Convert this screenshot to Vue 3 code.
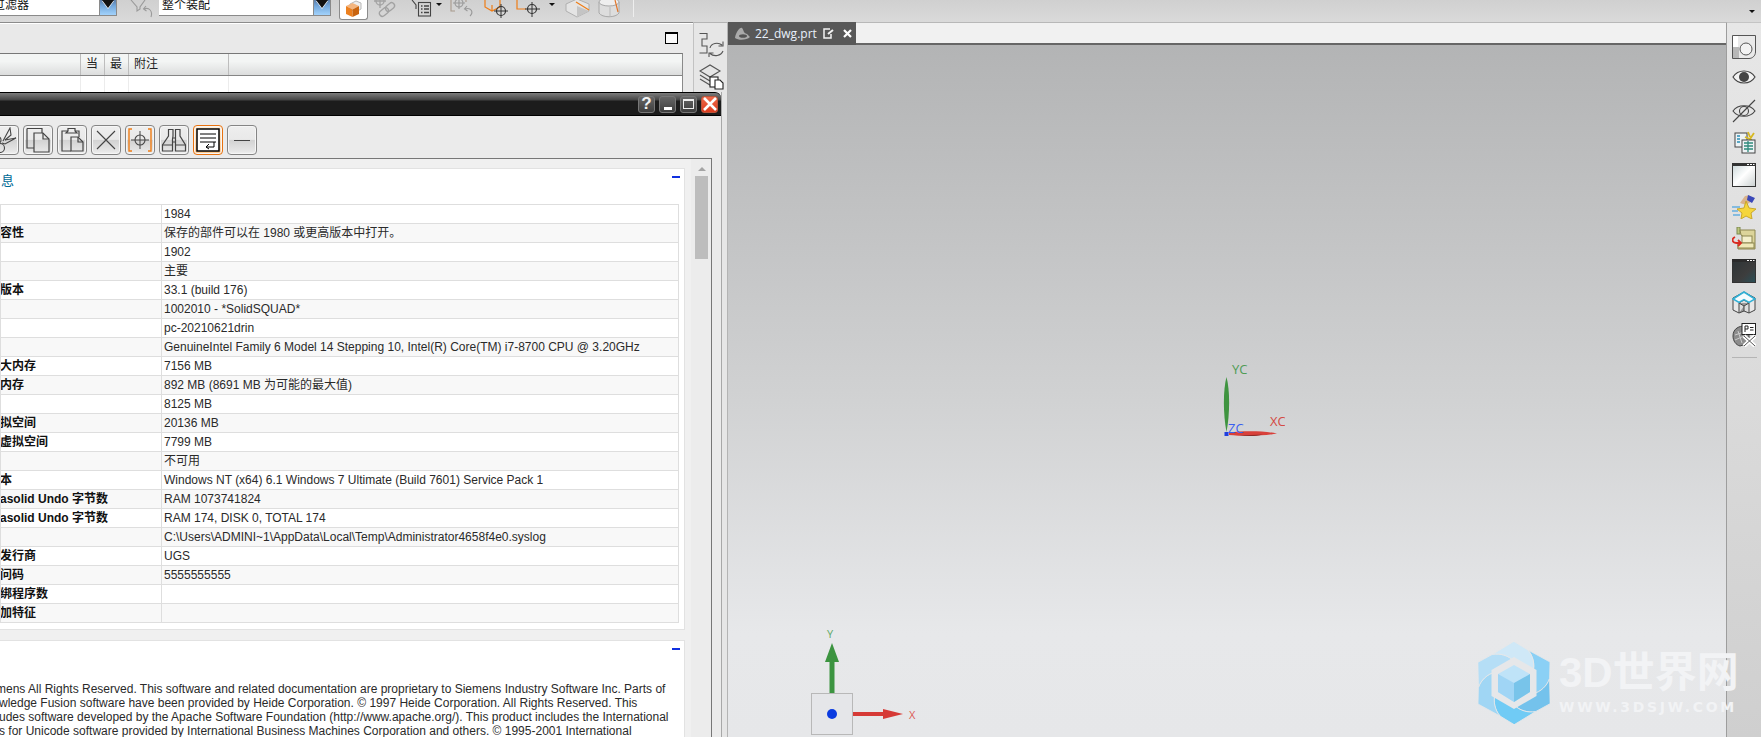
<script setup>
const rows = [
  ['', '1984'],
  ['容性', '保存的部件可以在 1980 或更高版本中打开。'],
  ['', '1902'],
  ['', '主要'],
  ['版本', '33.1 (build 176)'],
  ['', '1002010 - *SolidSQUAD*'],
  ['', 'pc-20210621drin'],
  ['', 'GenuineIntel Family 6 Model 14 Stepping 10, Intel(R) Core(TM) i7-8700 CPU @ 3.20GHz'],
  ['大内存', '7156 MB'],
  ['内存', '892 MB (8691 MB 为可能的最大值)'],
  ['', '8125 MB'],
  ['拟空间', '20136 MB'],
  ['虚拟空间', '7799 MB'],
  ['', '不可用'],
  ['本', 'Windows NT (x64) 6.1 Windows 7 Ultimate (Build 7601) Service Pack 1'],
  ['asolid Undo 字节数', 'RAM 1073741824'],
  ['asolid Undo 字节数', 'RAM 174, DISK 0, TOTAL 174'],
  ['', 'C:\\Users\\ADMINI~1\\AppData\\Local\\Temp\\Administrator4658f4e0.syslog'],
  ['发行商', 'UGS'],
  ['问码', '5555555555'],
  ['绑程序数', ''],
  ['加特征', ''],
]
const petals = [
  { a: 0, c: '#8bd0f5' },
  { a: 60, c: '#74c2ec' },
  { a: 120, c: '#70cbf5' },
  { a: 180, c: '#a0d6f4' },
  { a: 240, c: '#b5def6' },
  { a: 300, c: '#cfe8f7' },
]
</script>

<template>
  <div class="app">
    <header class="topbar">
      <div class="combo c1"><span class="combo-text t1">过滤器</span><i class="drop"></i></div>
      <svg class="ti m13" width="23" height="18" viewBox="0 0 23 18" fill="none" stroke="#9a9a9a" stroke-width="1.1"><path d="M1 0L7 7V11L10 9V7L15 0"/><path d="M21 17C23 11 19 7 14 9M16 6L13.5 9L16.5 11"/></svg>
      <div class="combo c2"><span class="combo-text">整个装配</span><i class="drop"></i></div>
      <div class="active-btn">
        <svg width="18" height="18" viewBox="0 0 18 18"><path d="M5 4L11 1L16 3V9L11 12L5 9Z" fill="#eee" stroke="#b8b8b8"/><path d="M1 6L7.500 3L14 6L7.500 9.500Z" fill="#f3b57f"/><path d="M1 6L7.500 9.500V17L1 14Z" fill="#ec801f"/><path d="M7.500 9.500L14 6V14L7.500 17Z" fill="#c9640f"/></svg>
      </div>
      <svg class="ti m5" width="24" height="18" viewBox="0 0 24 18" fill="none" stroke="#a2a2a2" stroke-width="1.3"><circle cx="7" cy="1" r="4"/><path d="M7 -3V8M1 1H13"/><rect x="6" y="9" width="10" height="6" rx="3" transform="rotate(-40 11 12)"/><rect x="12" y="4" width="10" height="6" rx="3" transform="rotate(-40 17 7)"/></svg>
      <svg class="ti m14" width="22" height="18" viewBox="0 0 22 18" fill="none" stroke="#444" stroke-width="1.1"><path d="M1 0L5 5V9"/><rect x="7.500" y="2.500" width="12" height="13.500"/><path d="M10 6H11.500M13 6H18M10 9H11.500M13 9H18M10 12.500H11.500M13 12.500H18" stroke-width="1.400"/></svg>
      <i class="mini m3"></i>
      <svg class="ti m8" width="24" height="18" viewBox="0 0 24 18" fill="none" stroke="#a89a8c" stroke-width="1.1"><path d="M1 0V11H5M16 0V2"/><circle cx="9" cy="3" r="4" stroke="#999"/><path d="M9 -2V9M3 3H15" stroke="#999"/><path d="M20 16C24 12 21 7 15 9M17 6L14.500 9L17.500 11" stroke="#999"/></svg>
      <svg class="ti m10" width="25" height="18" viewBox="0 0 25 18" fill="none" stroke="#ef7d16" stroke-width="1.2"><path d="M1 0V7L8 11L16 7V0M8 11V5"/><circle cx="17" cy="11" r="4.500" stroke="#333"/><path d="M17 4V18M10 11H24" stroke="#333" stroke-width="1"/></svg>
      <svg class="ti m7" width="27" height="18" viewBox="0 0 27 18" fill="none" stroke="#ef7d16" stroke-width="1.2"><path d="M1 0V9H10"/><circle cx="16" cy="9" r="4.500" stroke="#333"/><path d="M16 2V17M9 9H24" stroke="#333" stroke-width="1"/></svg>
      <i class="mini m6"></i>
      <svg class="ti m10" width="25" height="18" viewBox="0 0 25 18"><path d="M1 4L12 -1L24 4V11L12 17L1 11Z" fill="#e4e4e4" stroke="#b0b0b0"/><path d="M12 6L24 11L12 17Z" fill="#c4c4c4"/><path d="M11 2L24 10" stroke="#ef7d16" stroke-width="1.2"/></svg>
      <svg class="ti m8" width="23" height="18" viewBox="0 0 23 18"><path d="M1 2V13C4 18 18 18 21 13V2" fill="#ddd" stroke="#a8a8a8"/><ellipse cx="11" cy="2" rx="10" ry="4" fill="#eee" stroke="#a8a8a8"/><path d="M12 7V17" stroke="#b9b9b9"/><path d="M17 0L20 12" stroke="#e2762a" stroke-width="1.2" fill="none"/></svg>
      <i class="tsep"></i>
      <i class="mini end"></i>
    </header>

    <main class="body">
      <section class="leftpanel">
        <div class="lp-head"><i class="restore"></i></div>
        <div class="lp-table">
          <div class="lp-row hdr">
            <span class="c-a"></span><span class="c-b">当</span><span class="c-b">最</span><span class="c-c">附注</span><span class="c-d"></span>
          </div>
          <div class="lp-row">
            <span class="c-a"></span><span class="c-b"></span><span class="c-b"></span><span class="c-c"></span><span class="c-d"></span>
          </div>
        </div>
      </section>

      <aside class="midstrip">
        <svg width="25" height="25" viewBox="0 0 25 25" fill="none" stroke="#555" stroke-width="1.1"><path d="M0.500 0.500H8V6H3V13H8V20H0.500"/><path d="M11 15C12 10 19 9 23 12M24 8.500V13H19.500"/><path d="M24 18C22 23 15 24 11 20.500M10 24V20H14.500"/></svg>
        <svg width="25" height="26" viewBox="0 0 25 26" fill="none" stroke="#555" stroke-width="1.1"><path d="M1 7L11 1L21 7L11 13Z"/><path d="M1 11L11 17L14 15M1 15L11 21L14 19"/><rect x="11" y="13" width="8" height="10" fill="#fff" stroke="#222"/><path d="M16 16H21L24 19V25H16Z" fill="#fff" stroke="#222"/></svg>
      </aside>

      <section class="graphics">
        <div class="tabs">
          <div class="tab">
            <svg width="17" height="14" viewBox="0 0 17 14"><path d="M1 11C2 5 6 0 8 1C10 3 9 6 13 7L16 10C13 13 5 14 1 11Z" fill="#aaa"/><ellipse cx="9" cy="9" rx="4" ry="1.800" fill="#555"/></svg>
            <span class="tab-name">22_dwg.prt</span>
            <svg class="tab-save" width="11" height="11" viewBox="0 0 11 11" fill="none" stroke="#f2f2f2" stroke-width="1.500"><path d="M7 1H1V10H8V6"/><path d="M5 6L10 2" stroke-width="2"/></svg>
            <svg class="tab-x" width="9" height="9" viewBox="0 0 9 9" stroke="#fff" stroke-width="2.200"><path d="M1 1L8 8M8 1L1 8"/></svg>
          </div>
        </div>
        <div class="canvas">
          <svg class="wcs" width="70" height="75" viewBox="0 0 70 75">
            <path d="M11.500 13C15 26 15 50 11.500 68C8 50 8 26 11.500 13Z" fill="#3f9440"/>
            <path d="M14 68.500C30 66.500 50 67 62 69.500C50 72 30 72.500 14 71Z" fill="#d8403a"/>
            <path d="M24 71C32 71 40 71 48 70.500C40 72.500 32 72.500 24 71Z" fill="#8c2a26"/>
            <rect x="9.500" y="68" width="4" height="4" fill="#1f3fe0"/>
            <text x="17" y="10" fill="#4f9c55">YC</text>
            <text x="13" y="69" fill="#3a5ff0">ZC</text>
            <text x="55" y="62" fill="#d44a44">XC</text>
          </svg>
          <svg class="triad" width="120" height="110" viewBox="0 0 120 110">
            <text class="tr-l" x="17" y="8" fill="#5fa868">Y</text>
            <path d="M22 13L29 32H24.500V64H19.500V32H15Z" fill="#3c9440"/>
            <rect x="1.500" y="63.500" width="41" height="41" fill="#e5e6e9" stroke="#b8b8b8"/>
            <circle cx="22" cy="84" r="5" fill="#0b3be0"/>
            <path d="M43 82H73V79L93 84L73 89V86H43Z" fill="#d63a36"/>
            <text class="tr-l" x="99" y="89" fill="#dc5a55">X</text>
          </svg>
        </div>
        <div class="watermark">
          <svg class="wm-logo" width="72" height="82" viewBox="0 0 72 82">
            <g stroke="#e6e7e9" stroke-width="0.8">
              <path v-for="p in petals" :key="p.a" :fill="p.c" :transform="`rotate(${p.a} 36 41)`" d="M50 8L72 20L71.600 36.600C68.900 44 63 49.700 55 52L55 30C57 22 55 14 50 8Z"/>
            </g>
            <path d="M36 15L58.500 28V54L36 67L13.500 54V28Z" fill="#e6e7e9"/>
            <path d="M36 23L52 32V50L36 60L20 50V32Z" fill="#bfe3f8"/>
            <path d="M20 32L36 41V60L20 50Z" fill="#a0d5f5"/>
            <path d="M52 32L36 41V60L52 50Z" fill="#78c4ea"/>
          </svg>
          <div class="wm-text">
            <div class="wm-big">3D世界网</div>
            <div class="wm-small">WWW.3DSJW.COM</div>
          </div>
        </div>
      </section>

      <aside class="rightstrip">
        <svg width="24" height="24" viewBox="0 0 24 24"><path d="M0.500 0.500H23.500V17C23.500 21 20 23.500 17 23.500H0.500Z" fill="#e9e9e9" stroke="#555"/><rect x="1" y="1" width="5" height="11" fill="#fff"/><rect x="1" y="12" width="6" height="11" fill="#b8b8b8"/><circle cx="14" cy="14" r="6" fill="#f2f2f2" stroke="#555"/></svg>
        <svg class="up2" width="24" height="24" viewBox="0 0 24 24"><path d="M1 12C6 4 18 4 23 12C18 20 6 20 1 12Z" fill="#f2f2f2" stroke="#444" stroke-width="1.200"/><circle cx="12" cy="12" r="5" fill="#444"/></svg>
        <svg width="24" height="24" viewBox="0 0 24 24" fill="none" stroke="#444" stroke-width="1.100"><path d="M1 12C6 5 18 5 23 12C18 19 6 19 1 12Z"/><circle cx="12" cy="12" r="4.500"/><path d="M1 23L23 1"/></svg>
        <svg width="24" height="24" viewBox="0 0 24 24"><rect x="3" y="2" width="12" height="14" fill="#eef3f5" stroke="#444"/><path d="M5 5H8M5 8H8M5 11H8" stroke="#2a8fb5" stroke-width="1.500"/><path d="M16 1L18 6M22 2L18 8M13 6L20 9" stroke="#d7b820" stroke-width="1.800"/><rect x="10" y="9" width="13" height="13" fill="#eef3f5" stroke="#444"/><path d="M12 12H21M12 15H21M12 18H21M16 10V21" stroke="#2f8a7b" stroke-width="1.300"/></svg>
        <svg width="24" height="24" viewBox="0 0 24 24"><defs><linearGradient id="w1" x1="0" y1="0" x2="1" y2="1"><stop offset="0" stop-color="#c9d6d8"/><stop offset=".5" stop-color="#fff"/><stop offset="1" stop-color="#c9cfcf"/></linearGradient></defs><rect x=".5" y=".5" width="23" height="23" fill="url(#w1)" stroke="#333"/><rect x="0" y="0" width="24" height="3" fill="#333"/><path d="M15 1.500H17M18 1.500H20M21 1.500H22.500" stroke="#fff"/></svg>
        <svg width="24" height="24" viewBox="0 0 24 24"><path d="M13 1C18 -1 22 3 20 6L14 10L8 8Z" fill="#d9b28a"/><path d="M16 0L23 3L20 8L15 5Z" fill="#3a48b8"/><path d="M14 6L17 13L24 14L19 18L20 24L14 21L9 24L10 18L5 14L12 13Z" fill="#f5d63c" stroke="#caa82a"/><path d="M0 12H8M0 16H6M1 20H8" stroke="#66aede" stroke-width="1.300"/></svg>
        <svg width="24" height="24" viewBox="0 0 24 24"><rect x="5" y="0" width="3" height="7" fill="#bcc87c" stroke="#7d8850"/><path d="M8 3H23V22H6V16H12V10L9 8Z" fill="#dcd49a" stroke="#8c8650"/><rect x="10" y="9" width="10" height="7" fill="#f4f0cc" stroke="#8c8650"/><rect x="6" y="16" width="16" height="5" fill="#efe9b8" stroke="#8c8650"/><path d="M3 10C-1 12 0 16 5 16H9M6 13L9 16L6 19" fill="none" stroke="#d92a20" stroke-width="1.800"/></svg>
        <svg width="24" height="24" viewBox="0 0 24 24"><defs><linearGradient id="w2" x1="0" y1="0" x2="1" y2="1"><stop offset="0" stop-color="#2d3436"/><stop offset=".6" stop-color="#3d3d3d"/><stop offset="1" stop-color="#295058"/></linearGradient></defs><rect x=".5" y=".5" width="23" height="23" fill="url(#w2)" stroke="#333"/><rect x="0" y="0" width="24" height="3" fill="#2b2b2b"/><path d="M15 1.500H17M18 1.500H20M21 1.500H22.500" stroke="#fff"/></svg>
        <svg width="24" height="24" viewBox="0 0 24 24"><path d="M1 7L12 1L23 7L23 19L17 22V12L12 9L7 12V22L1 19Z" fill="#e8e8e8" stroke="#444"/><path d="M7 12L12 15L17 12M12 15V20L7 22M12 20L17 22" fill="#999" stroke="#444"/><path d="M1 8L12 1L23 8L17 11.500L12 8.500L7 11.500Z" fill="#f4fbfd" stroke="#2fb0d6" stroke-width="1.500"/></svg>
        <svg width="24" height="24" viewBox="0 0 24 24"><path d="M1 13C1 5 8 3 12 3L17 6L17 20L8 23C4 22 1 18 1 13Z" fill="#8c8c8c" stroke="#444"/><path d="M3 12L12 9M3 17L12 13M6 8L10 20" stroke="#ccc" fill="none"/><rect x="10" y="0.500" width="13.500" height="11" fill="#fff" stroke="#222"/><path d="M13 9V3H16V6H13M18 4.500H21.500M18 7H21.500" fill="none" stroke="#222"/><path d="M12 13L23 23M23 13L12 23" stroke="#fff" stroke-width="4"/><path d="M12 13L23 23M23 13L12 23" stroke="#555" stroke-width="1"/></svg>
        <i class="rs-sep"></i>
      </aside>

      <section class="dialog">
        <div class="titlebar">
          <span class="wbtn q">?</span>
          <span class="wbtn"><i class="w-min"></i></span>
          <span class="wbtn"><i class="w-max"></i></span>
          <span class="wbtn close"><svg width="14" height="14" viewBox="0 0 14 14" stroke="#fff" stroke-width="2.600"><path d="M1 1L13 13M13 1L1 13"/></svg></span>
        </div>
        <div class="dlg-tools">
          <button class="tbtn"><svg width="26" height="26" viewBox="0 0 26 26" fill="none" stroke="#444" stroke-width="1.100"><path d="M12 14L19 1L20 8L14 13"/><path d="M14 13L25 11L14 17L11 16"/><circle cx="9" cy="21" r="4.500"/><circle cx="7" cy="13" r="3"/></svg></button>
          <button class="tbtn"><svg width="26" height="26" viewBox="0 0 26 26" fill="none" stroke="#444" stroke-width="1.200"><path d="M2 1.500H17V6M2 1.500V21H9"/><path d="M9 6H18L24 12V25H9Z"/><path d="M18 6V12H24"/></svg></button>
          <button class="tbtn"><svg width="26" height="26" viewBox="0 0 26 26" fill="none" stroke="#444" stroke-width="1.200"><path d="M9 4H3V24H12M16 4H20V10"/><path d="M9 4V1.500H16V4L18 6H7Z"/><path d="M12 10H19L24 15V24H12Z"/><path d="M19 10V15H24"/></svg></button>
          <button class="tbtn"><svg width="22" height="22" viewBox="0 0 22 22" stroke="#444" stroke-width="1.100"><path d="M2 2L20 20M20 2L2 20"/></svg></button>
          <button class="tbtn"><svg width="26" height="26" viewBox="0 0 26 26" fill="none"><path d="M5 2H2V24H5M21 2H24V24H21" stroke="#ef7d16" stroke-width="1.400"/><circle cx="13" cy="13" r="5" stroke="#444" stroke-width="1.100"/><path d="M13 4V22M4 13H22" stroke="#444" stroke-width="1"/></svg></button>
          <button class="tbtn"><svg width="26" height="26" viewBox="0 0 26 26" fill="none" stroke="#444" stroke-width="1.200"><path d="M7.500 2.500H12V9L11.500 12V24H1.500V18L7.500 9Z"/><path d="M14.500 12V24H24.500V18L19 9V2.500H14.500V9Z"/><path d="M12 11H14.500M12 15H14.500M1.500 18H11.500M14.500 18H24.500"/></svg></button>
          <button class="tbtn on"><svg width="24" height="24" viewBox="0 0 24 24" fill="#fff"><rect x="1" y="1" width="22" height="22" stroke="#000" stroke-width="1.500"/><path d="M4 6H20M4 10H20M4 14H20" stroke="#000" fill="none"/><path d="M18 14V19H10M13 16L10 19L13 21" fill="none" stroke="#000"/></svg></button>
          <button class="tbtn"><i class="tmin"></i></button>
        </div>
        <div class="frame">
          <div class="scrollarea">
            <div class="card first">
              <div class="card-head"><span class="card-title">息</span><i class="collapse"></i></div>
              <table class="info">
                <tbody>
                  <tr v-for="(r, i) in rows" :key="i" :class="{ alt: i % 2 === 1 }">
                    <td class="lab"><span class="lab-t">{{ r[0] }}</span></td>
                    <td class="val">{{ r[1] }}</td>
                  </tr>
                </tbody>
              </table>
            </div>
            <div class="card second">
              <div class="card-head short"><i class="collapse"></i></div>
              <div class="legal">
                <div class="l1">mens All Rights Reserved. This software and related documentation are proprietary to Siemens Industry Software Inc. Parts of</div>
                <div>wledge Fusion software have been provided by Heide Corporation. © 1997 Heide Corporation. All Rights Reserved. This</div>
                <div>udes software developed by the Apache Software Foundation (http://www.apache.org/). This product includes the International</div>
                <div>s for Unicode software provided by International Business Machines Corporation and others. © 1995-2001 International</div>
              </div>
            </div>
          </div>
          <div class="scrollbar"><i class="arrow-up"></i><i class="thumb"></i></div>
        </div>
      </section>
    </main>
  </div>
</template>

<style scoped>
.app {
  position: relative;
  width: 1761px;
  height: 737px;
  overflow: hidden;
  display: flex;
  flex-direction: column;
  font-family: "Liberation Sans", "Noto Sans CJK SC", sans-serif;
  font-size: 12px;
  color: #222;
  background: #e6e6e6;
}
i { display: block; font-style: normal; }

/* top toolbar */
.topbar {
  height: 22px;
  flex: none;
  display: flex;
  align-items: flex-start;
  overflow: hidden;
  background: linear-gradient(#d0d0d0, #dadada);
}
.ti { flex: none; display: block; }
.m3 { margin-left: 3px; }
.m5 { margin-left: 5px; }
.m6 { margin-left: 6px; }
.m7 { margin-left: 7px; }
.m8 { margin-left: 8px; }
.m10 { margin-left: 10px; }
.m13 { margin-left: 13px; }
.m14 { margin-left: 14px; }
.combo {
  height: 15px;
  flex: none;
  display: flex;
  justify-content: space-between;
  background: #fff;
  border-bottom: 1px solid #8a8a8a;
  overflow: hidden;
}
.c1 { width: 117px; }
.c2 { width: 172px; margin-left: 6px; }
.combo-text {
  font-size: 12px;
  line-height: 11px;
  padding-left: 3px;
  color: #111;
  white-space: nowrap;
}
.t1 { margin-left: -10px; }
.drop {
  position: relative;
  width: 16px;
  height: 15px;
  background: linear-gradient(#5c7da8, #74a8dc 40%, #a2d2fb);
  border-left: 1px solid #8a8a8a;
  border-right: 1px solid #8a8a8a;
}
.drop::after {
  content: "";
  position: absolute;
  left: 2px;
  top: 0;
  border-left: 6px solid transparent;
  border-right: 6px solid transparent;
  border-top: 8px solid #111;
  filter: drop-shadow(0 1px 0 #fff);
}
.active-btn {
  width: 29px;
  height: 20px;
  margin-left: 8px;
  flex: none;
  display: flex;
  justify-content: center;
  background: #fff;
  border: 1px solid #8c8c8c;
  border-top: 0;
  border-radius: 0 0 3px 3px;
  box-sizing: border-box;
}
.mini {
  flex: none;
  width: 0;
  height: 0;
  margin-top: 3px;
  border-left: 3px solid transparent;
  border-right: 3px solid transparent;
  border-top: 3px solid #111;
}
.mini.end { margin-left: 1115px; margin-top: 10px; }
.tsep { flex: none; width: 1px; height: 17px; margin-left: 12px; background: #eee; }

/* body */
.body { flex: 1; min-height: 0; display: flex; }

.leftpanel {
  width: 693px;
  flex: none;
  box-sizing: border-box;
  background: #e9e9e9;
  border-top: 1px solid #8b8b8b;
}
.lp-head {
  height: 29px;
  border-top: 1px solid #fff;
  position: relative;
}
.restore {
  position: absolute;
  left: 665px;
  top: 8px;
  width: 13px;
  height: 12px;
  box-sizing: border-box;
  border: 1px solid #000;
  border-top-width: 2px;
  background: #fafafa;
}
.lp-table {
  width: 683px;
  box-sizing: border-box;
  border-top: 1px solid #777;
  border-right: 1px solid #8a8a8a;
}
.lp-row { display: flex; height: 17px; background: #fff; }
.lp-row.hdr {
  height: 21px;
  background: linear-gradient(#f3f5f4 35%, #dcdddd);
  border-bottom: 1px solid #858585;
  line-height: 20px;
}
.lp-row span { box-sizing: border-box; border-right: 1px solid #ececec; }
.lp-row.hdr span { border-right-color: #bdbdbd; }
.c-a { width: 81px; }
.c-b { width: 24px; padding-left: 5px; }
.c-c { width: 100px; padding-left: 5px; }
.lp-row .c-d { flex: 1; border-right: 0; }

.midstrip {
  width: 35px;
  flex: none;
  box-sizing: border-box;
  display: flex;
  flex-direction: column;
  gap: 6px;
  padding: 10px 0 0 5px;
  background: #e6e6e6;
  border-top: 1px solid #b4b4b4;
  border-left: 1px solid #c2c2c2;
  border-right: 1px solid #b4b4b4;
}

.graphics {
  width: 998px;
  flex: none;
  display: flex;
  flex-direction: column;
  min-height: 0;
}
.tabs {
  height: 23px;
  flex: none;
  background: #f1f1f1;
  box-shadow: inset 0 -2px 0 #666, inset 0 1px 0 #b8b8b8;
}
.tab {
  width: 128px;
  height: 23px;
  display: flex;
  align-items: center;
  box-sizing: border-box;
  padding-left: 6px;
  background: #585858;
  color: #e8f0fb;
}
.tab-name {
  font-family: "Open Sans", sans-serif;
  font-size: 12px;
  margin-left: 4px;
  white-space: nowrap;
}
.tab-save { margin-left: 6px; }
.tab-x { margin-left: 9px; }
.canvas {
  flex: 1;
  position: relative;
  background: linear-gradient(#b3b4b5, #d0d1d2 50%, #e7e8ea 85%, #e6e7e9);
  overflow: hidden;
}
.wcs { position: absolute; left: 487px; top: 319px; }
.wcs text {
  font-family: "Open Sans", sans-serif;
  font-size: 13px;
}
.triad { position: absolute; left: 82px; top: 585px; }
.tr-l { font-family: "Open Sans", sans-serif; font-size: 11px; }

.watermark {
  position: absolute;
  left: 1478px;
  top: 642px;
  display: flex;
  gap: 9px;
  pointer-events: none;
}
.wm-logo { display: block; flex: none; }
.wm-text { padding-top: 7px; color: #f2f3f5; white-space: nowrap; font-weight: 700; }
.wm-big { font-size: 42px; line-height: 48px; }
.wm-small {
  font-family: "DejaVu Sans", sans-serif;
  font-size: 14px;
  line-height: 14px;
  letter-spacing: 2.7px;
  margin-top: 3px;
}

.rightstrip {
  flex: 1;
  min-width: 0;
  display: flex;
  flex-direction: column;
  align-items: center;
  gap: 8px;
  padding-top: 12px;
  box-sizing: border-box;
  background: linear-gradient(#e7e7e7, #cfcfcf);
  border-top: 1px solid #c4c4c4;
  border-left: 1px solid #9d9d9d;
}
.rightstrip svg { display: block; flex: none; }
.up2 { transform: translateY(-2px); }
.rs-sep { width: 25px; height: 1px; margin-top: 2px; background: #b5b5b5; }

/* floating dialog */
.dialog {
  position: absolute;
  left: 0;
  top: 92px;
  bottom: 0;
  width: 722px;
  display: flex;
  flex-direction: column;
  background: #ebebeb;
  border-right: 1px solid #a8a8a8;
  box-sizing: border-box;
}
.titlebar {
  height: 24px;
  flex: none;
  display: flex;
  justify-content: flex-end;
  gap: 4px;
  align-items: center;
  padding-right: 3px;
  box-sizing: border-box;
  background: linear-gradient(#7d7d7d, #444 7px, #1c1c1c 8px, #1c1c1c);
  border-top: 1px solid #000;
  border-bottom: 1px solid #000;
  border-radius: 0 6px 0 0;
}
.wbtn {
  width: 17px;
  height: 17px;
  display: flex;
  align-items: center;
  justify-content: center;
  box-sizing: border-box;
  border: 1px solid #777;
  border-radius: 3px;
  background: linear-gradient(#666, #3e3e3e);
  color: #f2f2f2;
}
.q { font-weight: 700; font-size: 17px; }
.w-min { width: 8px; height: 3px; margin-top: 8px; background: #fff; }
.w-max { width: 11px; height: 10px; box-sizing: border-box; border: 1px solid #eee; border-top-width: 2px; }
.close { background: linear-gradient(#ee6a4a, #dc3c1e); border-color: #b9553d; }
.dlg-tools {
  height: 42px;
  flex: none;
  box-sizing: border-box;
  display: flex;
  gap: 4px;
  padding-top: 9px;
  margin-left: -11px;
}
.tbtn {
  width: 30px;
  height: 30px;
  flex: none;
  padding: 0;
  display: flex;
  align-items: center;
  justify-content: center;
  border: 1px solid #858585;
  border-radius: 4px;
  background: linear-gradient(#eeeeee, #e9e9e9 48%, #d2d2d2 50%, #e6e6e6 90%, #f2f2f2);
  box-shadow: inset 0 0 0 1px #f6f6f6;
}
.tbtn.on {
  border: 1px solid #e8720f;
  background: linear-gradient(#fff0dc, #ffc88c);
}
.tmin { width: 16px; height: 1px; background: #444; }
.frame {
  flex: 1;
  min-height: 0;
  width: 712px;
  display: flex;
  box-sizing: border-box;
  border-top: 1px solid #777;
  border-right: 1px solid #777;
  background: #f0f0f0;
}
.scrollarea {
  width: 691px;
  flex: none;
  padding-top: 9px;
  box-sizing: border-box;
}
.card {
  width: 686px;
  box-sizing: border-box;
  margin-left: -1px;
  background: #fff;
  border: 1px solid #e2e2e2;
}
.card.first { height: 462px; margin-bottom: 10px; }
.card-head {
  height: 35px;
  position: relative;
}
.card-head.short { height: 41px; }
.card-title {
  display: block;
  padding-left: 1px;
  padding-top: 3px;
  font-size: 13px;
  line-height: 18px;
  color: #006a96;
}
.collapse {
  position: absolute;
  right: 4px;
  top: 7px;
  width: 8px;
  height: 2px;
  background: #1030e0;
}
.info {
  border-collapse: collapse;
  width: 679px;
  table-layout: fixed;
}
.info td {
  height: 19px;
  padding: 0 0 0 2px;
  box-sizing: border-box;
  border: 1px solid #dedede;
  white-space: nowrap;
  overflow: hidden;
  line-height: 17px;
}
.info tr.alt { background: #f8f8f8; }
.info .lab {
  width: 161px;
  padding-left: 0;
  font-weight: 700;
  color: #111;
}
.lab-t { display: block; margin-left: -1px; }
.info .val { color: #2a2a2a; }
.legal {
  line-height: 14px;
  white-space: nowrap;
  color: #2a2a2a;
  overflow: hidden;
  margin-left: -1px;
}
.l1 { margin-left: -3px; }
.scrollbar {
  flex: 1;
  position: relative;
  background: #ececec;
}
.arrow-up {
  position: absolute;
  left: 7px;
  top: 8px;
  border-left: 4px solid transparent;
  border-right: 4px solid transparent;
  border-bottom: 4px solid #a4a4a4;
}
.thumb {
  position: absolute;
  left: 4px;
  top: 17px;
  width: 13px;
  height: 83px;
  background: #bdbdbd;
}
</style>

<style>
html, body { margin: 0; padding: 0; overflow: hidden; }
</style>
